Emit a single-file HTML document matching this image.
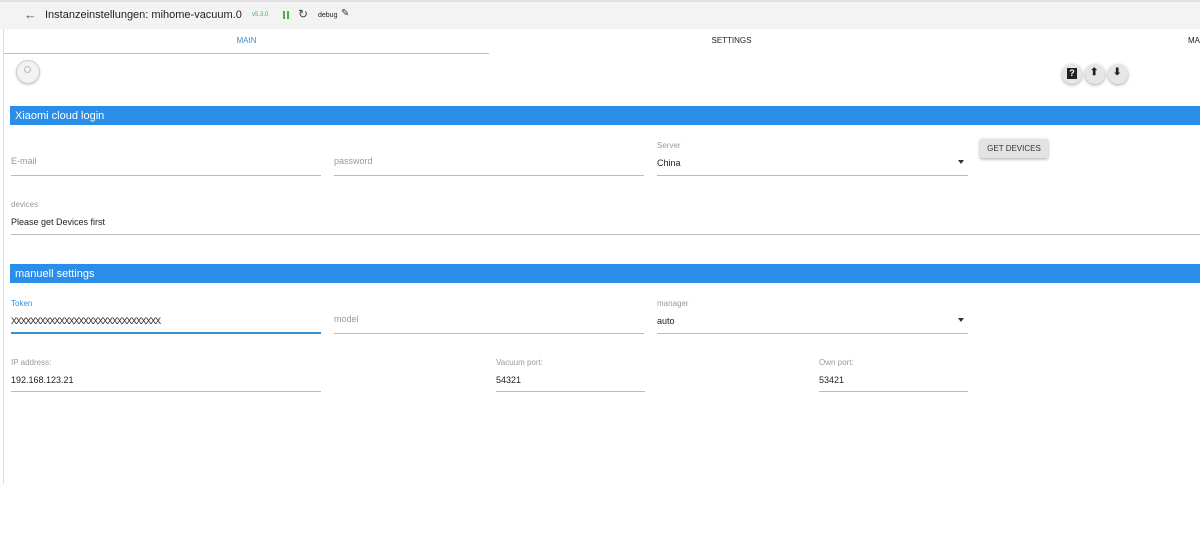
<!DOCTYPE html>
<html><head><style>
body{margin:0;width:1200px;height:554px;background:#fff;font-family:"Liberation Sans",sans-serif;position:relative;overflow:hidden}
.a{position:absolute}
.hdr{left:0;top:0;width:1200px;height:29px;background:#f3f3f3;border-top:2px solid #e0e0e0;box-sizing:border-box}
.lbl{font-size:8px;color:#999}
.val{font-size:9px;color:#222}
.line{height:1px;background:#bbb}
.bar{left:10px;width:1190px;height:19px;background:#2a8ee8;color:#fff;font-size:11px;line-height:20px;padding-left:5px;box-sizing:border-box}
.fab{width:20px;height:20px;border-radius:50%;background:#e6e6e6;box-shadow:0 1px 3px rgba(0,0,0,.35);top:64px}
</style></head><body>
<div class="a hdr"></div>
<div class="a" style="left:24px;top:7px;font-size:13px;color:#555">←</div>
<div class="a" style="left:45px;top:9px;font-size:11px;color:#222">Instanzeinstellungen: mihome-vacuum.0</div>
<div class="a" style="left:252px;top:12px;font-size:6px;color:#4caf50">v5.3.0</div>
<div class="a" style="left:283px;top:11px;width:2px;height:8px;background:#4caf50"></div>
<div class="a" style="left:287px;top:11px;width:2px;height:8px;background:#4caf50"></div>
<div class="a" style="left:298px;top:7px;font-size:12px;color:#444">↻</div>
<div class="a" style="left:318px;top:12px;font-size:7px;color:#222">debug</div>
<div class="a" style="left:341px;top:8px;font-size:10px;color:#333">✎</div>
<div class="a" style="left:3px;top:29px;width:1px;height:455px;background:#ddd"></div>
<div class="a" style="left:4px;top:36px;width:485px;text-align:center;font-size:8px;color:#3a8fd0">MAIN</div>
<div class="a" style="left:489px;top:36px;width:485px;text-align:center;font-size:8px;color:#222">SETTINGS</div>
<div class="a" style="left:1188px;top:36px;font-size:8px;color:#222">MA</div>
<div class="a" style="left:4px;top:53px;width:485px;height:1px;background:#9ccbe8"></div>
<div class="a" style="left:16px;top:60px;width:22px;height:22px;border-radius:50%;background:#f2f2f2;border:1px solid #ccc;box-shadow:0 1px 2px rgba(0,0,0,.2)"></div>
<div class="a" style="left:24px;top:66px;width:5px;height:5px;border-radius:50%;border:1px solid #bbb"></div>
<div class="a fab" style="left:1062px"><div class="a" style="left:5px;top:4px;width:10px;height:11px;background:#222;color:#fff;font-size:9px;font-weight:bold;text-align:center;line-height:11px">?</div></div>
<div class="a fab" style="left:1085px"><div class="a" style="left:5px;top:3px;font-size:10px;color:#222;font-weight:bold">⬆</div></div>
<div class="a fab" style="left:1108px"><div class="a" style="left:5px;top:3px;font-size:10px;color:#222;font-weight:bold">⬇</div></div>
<div class="a bar" style="top:106px">Xiaomi cloud login</div>
<div class="a lbl" style="left:11px;top:156px;font-size:9px;color:#999">E-mail</div>
<div class="a line" style="left:11px;top:175px;width:310px"></div>
<div class="a lbl" style="left:334px;top:156px;font-size:9px;color:#999">password</div>
<div class="a line" style="left:334px;top:175px;width:310px"></div>
<div class="a lbl" style="left:657px;top:141px">Server</div>
<div class="a val" style="left:657px;top:158px">China</div>
<div class="a" style="left:958px;top:160px;border:3px solid transparent;border-top:4px solid #333"></div>
<div class="a line" style="left:657px;top:175px;width:311px"></div>
<div class="a" style="left:980px;top:139px;width:68px;height:19px;background:#e3e3e3;box-shadow:0 1px 3px rgba(0,0,0,.35);font-size:8px;color:#333;text-align:center;line-height:19px;border-radius:2px">GET DEVICES</div>
<div class="a lbl" style="left:11px;top:200px">devices</div>
<div class="a val" style="left:11px;top:217px">Please get Devices first</div>
<div class="a line" style="left:11px;top:234px;width:1189px"></div>
<div class="a bar" style="top:264px">manuell settings</div>
<div class="a lbl" style="left:11px;top:299px;color:#3a8fd0">Token</div>
<div class="a val" style="left:11px;top:316px;letter-spacing:-1.2px">XXXXXXXXXXXXXXXXXXXXXXXXXXXXXXX</div>
<div class="a" style="left:11px;top:332px;width:310px;height:2px;background:#3a8fd0"></div>
<div class="a lbl" style="left:334px;top:314px;font-size:9px">model</div>
<div class="a line" style="left:334px;top:333px;width:310px"></div>
<div class="a lbl" style="left:657px;top:299px">manager</div>
<div class="a val" style="left:657px;top:316px">auto</div>
<div class="a" style="left:958px;top:318px;border:3px solid transparent;border-top:4px solid #333"></div>
<div class="a line" style="left:657px;top:333px;width:311px"></div>
<div class="a lbl" style="left:11px;top:358px">IP address:</div>
<div class="a val" style="left:11px;top:375px">192.168.123.21</div>
<div class="a line" style="left:11px;top:391px;width:310px"></div>
<div class="a lbl" style="left:496px;top:358px">Vacuum port:</div>
<div class="a val" style="left:496px;top:375px">54321</div>
<div class="a line" style="left:496px;top:391px;width:149px"></div>
<div class="a lbl" style="left:819px;top:358px">Own port:</div>
<div class="a val" style="left:819px;top:375px">53421</div>
<div class="a line" style="left:819px;top:391px;width:149px"></div>
</body></html>
